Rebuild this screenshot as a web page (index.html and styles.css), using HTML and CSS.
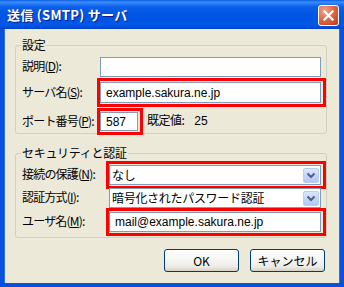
FILE: index.html
```html
<!DOCTYPE html>
<html lang="ja">
<head>
<meta charset="utf-8">
<title>送信 (SMTP) サーバ</title>
<link rel="stylesheet" href="styles.css">
</head>
<body>
<div class="window">
  <div class="titlebar">
    <span class="title">送信 (SMTP) サーバ</span>
    <div class="close"><svg viewBox="0 0 19 19" width="19" height="19"><path d="M5.5 5.5 L13.5 13.5 M13.5 5.5 L5.5 13.5" stroke="#fff" stroke-width="2.2" stroke-linecap="square" fill="none"/></svg></div>
  </div>
  <div class="client">
    <fieldset class="group g1">
      <legend>設定</legend>
      <div class="row ra"><label>説明(<u>D</u>):</label><input class="edit" type="text" value=""></div>
      <div class="row rb"><label>サーバ名(<u>S</u>):</label><div class="hl"><input class="edit" type="text" value="example.sakura.ne.jp"></div></div>
      <div class="row rc"><label>ポート番号(<u>P</u>):</label><div class="hl fixed"><input class="edit port" type="text" value="587"></div><span class="default">既定値:<span class="val">25</span></span></div>
    </fieldset>
    <fieldset class="group g2">
      <legend>セキュリティと認証</legend>
      <div class="row rd"><label>接続の保護(<u>N</u>):</label><div class="hl"><div class="combo"><span class="ctext">なし</span><span class="cbtn"><svg viewBox="0 0 16 15" width="16" height="15"><path d="M4.5 5.5 L8 9 L11.5 5.5" stroke="#4D6185" stroke-width="2" fill="none"/></svg></span></div></div></div>
      <div class="row re"><label>認証方式(<u>I</u>):</label><div class="combo"><span class="ctext">暗号化されたパスワード認証</span><span class="cbtn"><svg viewBox="0 0 16 15" width="16" height="15"><path d="M4.5 5.5 L8 9 L11.5 5.5" stroke="#4D6185" stroke-width="2" fill="none"/></svg></span></div></div>
      <div class="row rf"><label>ユーザ名(<u>M</u>):</label><div class="hl"><input class="edit user" type="text" value="mail@example.sakura.ne.jp"></div></div>
    </fieldset>
    <div class="buttons">
      <button class="xpbtn">OK</button>
      <button class="xpbtn">キャンセル</button>
    </div>
  </div>
</div>
</body>
</html>
```
FILE: styles.css
```css
html, body {
  margin: 0;
  padding: 0;
  background: #ffffff;
}
body {
  font-family: "Noto Sans CJK JP", "Liberation Sans", sans-serif;
  font-size: 12px;
  color: #000;
}
.window {
  width: 344px;
  height: 287px;
  display: flex;
  flex-direction: column;
  overflow: hidden;
}
.titlebar {
  height: 29px;
  flex: none;
  box-sizing: border-box;
  display: flex;
  align-items: center;
  justify-content: space-between;
  padding: 0 5px 0 7px;
  background: linear-gradient(to bottom,
    #0A5CE6 0px, #3D8EF9 2px, #2777F3 4px, #0A60EC 7px,
    #0055E5 14px, #0054E3 20px, #0058EA 25px, #0049D4 28px, #003DBE 29px);
}
.title {
  color: #fff;
  font-weight: bold;
  font-size: 13px;
  line-height: 16px;
  text-shadow: 1px 1px 0 #0A1E8C;
  letter-spacing: 0.3px;
}
.close {
  width: 21px;
  height: 21px;
  box-sizing: border-box;
  border: 1px solid #fff;
  border-radius: 3px;
  background: radial-gradient(circle at 30% 25%, #F1A18A 0%, #E26A47 45%, #CC4A26 80%, #B33A18 100%);
  display: flex;
  align-items: center;
  justify-content: center;
  margin-top: 1px;
}
.close svg { display: block; }
.client {
  flex: 1;
  background: #ECE9D8;
  border: 4px solid #0A50DE;
  border-top: 0;
  box-shadow: inset 1px 0 0 #2F6FE0, inset -1px 0 0 #2F6FE0;
  padding: 9px 13px 0 11px;
  display: flex;
  flex-direction: column;
}
.group {
  margin: 0;
  width: 312px;
  box-sizing: border-box;
  border: 1px solid #D0D0BF;
  border-radius: 3px;
  padding: 5px 5px 2px 6px;
}
.group legend {
  padding: 0 1px;
  margin-left: -1px;
  line-height: 14px;
  font-size: 12px;
  letter-spacing: -0.3px;
}
.g2 {
  margin-top: 12px;
  padding-bottom: 5px;
}
.row {
  display: flex;
  align-items: center;
}
.row label {
  flex: none;
  white-space: nowrap;
  line-height: 14px;
  padding-bottom: 2px;
  letter-spacing: -0.8px;
}
.g1 label { width: 78px; }
.g2 label { width: 87px; }
.ra { height: 20px; margin-bottom: 5px; }
.rb { height: 21px; margin-bottom: 9px; }
.rc { height: 19px; }
.rd { height: 20px; margin-bottom: 3px; }
.re { height: 20px; margin-bottom: 4px; }
.rf { height: 20px; }
.edit {
  flex: 1;
  min-width: 0;
  height: 100%;
  margin: 0;
  box-sizing: border-box;
  border: 1px solid #7F9DB9;
  background: #fff;
  outline: none;
  padding: 0 0 0 5px;
  font-family: "Liberation Sans", sans-serif;
  font-size: 12px;
  color: #000;
}
.hl {
  flex: 1;
  display: flex;
  height: 100%;
  box-sizing: content-box;
  padding: 1px 2px 1px 0;
  margin: -1px -2px -1px 0;
  outline: 3px solid #FF0000;
  outline-offset: 0;
}
.hl.fixed {
  flex: none;
}
.port {
  flex: none;
  width: 38px;
}
.default {
  margin-left: 9px;
  padding-bottom: 2px;
  line-height: 14px;
  white-space: nowrap;
  letter-spacing: -0.5px;
}
.default .val {
  margin-left: 10px;
  letter-spacing: 0;
  font-family: "Liberation Sans", sans-serif;
}
.combo {
  flex: 1;
  min-width: 0;
  height: 100%;
  box-sizing: border-box;
  border: 1px solid #7F9DB9;
  background: #fff;
  display: flex;
  align-items: center;
  padding-left: 2px;
}
.ctext {
  flex: 1;
  min-width: 0;
  white-space: nowrap;
  line-height: 16px;
  letter-spacing: -0.3px;
}
.cbtn {
  flex: none;
  width: 16px;
  height: 15px;
  margin-right: 1px;
  box-sizing: border-box;
  border: 1px solid #BCCDF4;
  border-radius: 2px;
  background: linear-gradient(to bottom, #DCE6FC 0%, #C6D6FA 50%, #B2C6F5 100%);
  display: flex;
}
.cbtn svg { display: block; margin: -1px; }
.buttons {
  display: flex;
  justify-content: flex-end;
  gap: 11px;
  margin-top: 11px;
  padding-right: 2px;
}
.xpbtn {
  width: 75px;
  height: 23px;
  margin: 0;
  box-sizing: border-box;
  border: 1px solid #003C74;
  border-radius: 3px;
  background: linear-gradient(to bottom, #FFFFFF 0%, #F7F7F4 40%, #ECEBE6 80%, #D6D0C5 100%);
  font-family: "Noto Sans CJK JP", "Liberation Sans", sans-serif;
  font-size: 12px;
  color: #000;
  padding: 0;
  line-height: 14px;
}
```
